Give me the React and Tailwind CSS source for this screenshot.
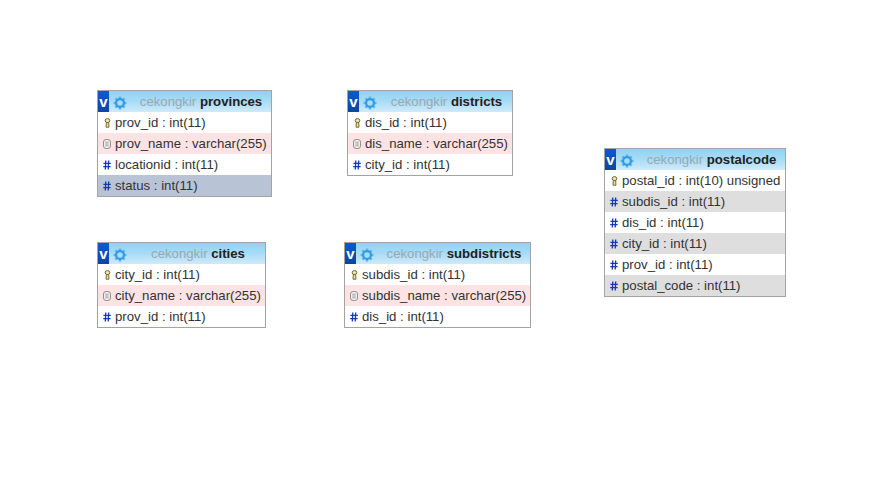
const KEY = "key", IDX = "idx", NUM = "num";

function FieldIcon({ type }) {
  if (type === "key")
    return (
      <svg width="7" height="10" viewBox="0 0 7 10" className="mt-[1px] shrink-0">
        <ellipse cx="3.5" cy="2.6" rx="2.3" ry="2" fill="#f3e8b0" stroke="#6e6430" strokeWidth="1" />
        <path d="M2.3 4.6h2.4l.3 4.6h-3z" fill="#e8d890" stroke="#6e6430" strokeWidth="0.9" />
      </svg>
    );
  if (type === "idx")
    return (
      <svg width="8" height="10" viewBox="0 0 8 10" className="mt-[1px] shrink-0">
        <rect x="0.5" y="0.5" width="7" height="9" rx="2.6" fill="#f6f2f2" stroke="#8c8c8c" />
        <path d="M2.2 3.2h3.6M2.2 5h3.6M2.2 6.8h3.6" stroke="#8c8c8c" strokeWidth="0.8" />
      </svg>
    );
  return (
    <svg width="8" height="10" viewBox="0 0 8 10" className="mt-[1px] shrink-0">
      <path d="M2.8 0.5 2.3 9.5M5.7 0.5 5.2 9.5M0.4 3.3h7.4M0.2 6.7h7.4" stroke="#1238b4" strokeWidth="1.3" fill="none" />
    </svg>
  );
}

function Gear() {
  return (
    <svg width="14" height="14" viewBox="0 0 14 14" className="mt-[2px] shrink-0">
      <g stroke="#5db3ea" strokeWidth="2.4">
        <path d="M7 0.5v13M0.5 7h13M2.4 2.4l9.2 9.2M11.6 2.4l-9.2 9.2" />
      </g>
      <circle cx="7" cy="7" r="5" fill="#2f9be4" />
      <circle cx="7" cy="7" r="2.8" fill="#a9dcf5" />
    </svg>
  );
}

function Table({ left, top, width, title, rows }) {
  return (
    <div className="absolute border border-[#a3a3a3] bg-white" style={{ left, top, width }}>
      <div className="flex h-[21px] items-center bg-gradient-to-b from-[#90d2f3] via-[#a8dcf6] to-[#cfeafa]">
        <div className="flex h-full w-[11px] shrink-0 items-center justify-center bg-gradient-to-b from-[#0a5ad2] to-[#0c469f] pb-[1px] text-[15px] font-bold leading-none text-white">
          v
        </div>
        <div className="ml-[4px]">
          <Gear />
        </div>
        <div className="flex-1 whitespace-nowrap pl-[4px] text-center text-[13.2px] leading-none">
          <span className="text-[#9aa8b0]">cekongkir </span>
          <span className="font-bold text-[#222222]">{title}</span>
        </div>
      </div>
      {rows.map((r) => (
        <div
          key={r.text}
          className={`flex h-[21px] items-center gap-[4px] whitespace-nowrap pl-[5px] text-[13.2px] text-[#333333] ${r.bg || ""}`}
        >
          <span className="flex w-[8px] shrink-0 justify-center">
            <FieldIcon type={r.icon} />
          </span>
          <span>{r.text}</span>
        </div>
      ))}
    </div>
  );
}

const PINK = "bg-[#fde3e3]";
const GREY = "bg-[#dedede]";
const BLUE = "bg-[#b8c4d6]";

const tables = [
  {
    left: 97, top: 90, width: 175, title: "provinces",
    rows: [
      { icon: KEY, text: "prov_id : int(11)" },
      { icon: IDX, text: "prov_name : varchar(255)", bg: PINK },
      { icon: NUM, text: "locationid : int(11)" },
      { icon: NUM, text: "status : int(11)", bg: BLUE },
    ],
  },
  {
    left: 347, top: 90, width: 166, title: "districts",
    rows: [
      { icon: KEY, text: "dis_id : int(11)" },
      { icon: IDX, text: "dis_name : varchar(255)", bg: PINK },
      { icon: NUM, text: "city_id : int(11)" },
    ],
  },
  {
    left: 97, top: 242, width: 169, title: "cities",
    rows: [
      { icon: KEY, text: "city_id : int(11)" },
      { icon: IDX, text: "city_name : varchar(255)", bg: PINK },
      { icon: NUM, text: "prov_id : int(11)" },
    ],
  },
  {
    left: 344, top: 242, width: 187, title: "subdistricts",
    rows: [
      { icon: KEY, text: "subdis_id : int(11)" },
      { icon: IDX, text: "subdis_name : varchar(255)", bg: PINK },
      { icon: NUM, text: "dis_id : int(11)" },
    ],
  },
  {
    left: 604, top: 148, width: 182, title: "postalcode",
    rows: [
      { icon: KEY, text: "postal_id : int(10) unsigned" },
      { icon: NUM, text: "subdis_id : int(11)", bg: GREY },
      { icon: NUM, text: "dis_id : int(11)" },
      { icon: NUM, text: "city_id : int(11)", bg: GREY },
      { icon: NUM, text: "prov_id : int(11)" },
      { icon: NUM, text: "postal_code : int(11)", bg: GREY },
    ],
  },
];

export default function App() {
  return (
    <div className="relative h-[481px] w-[871px] overflow-hidden bg-white font-['Liberation_Sans',Arial,sans-serif]">
      {tables.map((t) => (
        <Table key={t.title} {...t} />
      ))}
    </div>
  );
}
